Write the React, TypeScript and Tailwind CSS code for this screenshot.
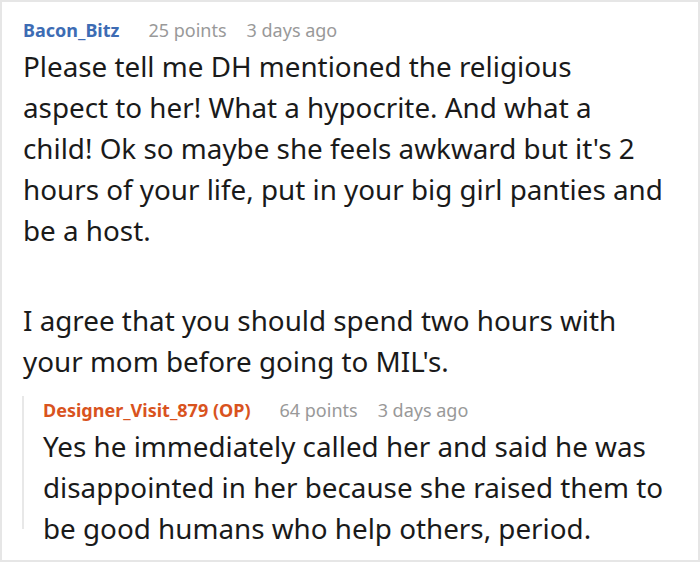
export default function App() {
  return (
    <div className="w-[700px] h-[562px] bg-white overflow-hidden" style={{ fontFamily: '"Noto Sans", sans-serif' }}>
      <div className="w-[700px] h-[562px] border-2 border-[#e6e6e6] pl-[21px] pr-[34px] pt-[13px]">
        <div className="flex items-baseline text-[18px] leading-[30px]">
          <span className="font-bold text-[#3d6cb4]">Bacon_Bitz</span>
          <span className="ml-[29px] text-[#999999]">25 points</span>
          <span className="ml-[20px] text-[#999999]">3 days ago</span>
        </div>
        <div className="mt-[1px] text-[27.8px] leading-[41px] text-[#1a1a1a]">
          <p>
            Please tell me DH mentioned the religious
            <br />
            aspect to her! What a hypocrite. And what a child! Ok so maybe she feels awkward but it's 2 hours of your life, put in your big girl panties and be a host.
          </p>
          <p className="mt-[49px]">I agree that you should spend two hours with your mom before going to MIL's.</p>
        </div>
        <div className="mt-[28px] ml-[-1px] mr-[-2px] h-[133px] border-l-2 border-[#e8e8e8] pl-[19px]">
          <div className="mt-[-14px] flex items-baseline text-[18px] leading-[28px]">
            <span className="font-bold text-[#d9531e]">Designer_Visit_879 (OP)</span>
            <span className="ml-[29px] text-[#999999]">64 points</span>
            <span className="ml-[20px] text-[#999999]">3 days ago</span>
          </div>
          <div className="mt-[2px] text-[27.8px] leading-[41px] text-[#1a1a1a]">
            <p>Yes he immediately called her and said he was disappointed in her because she raised them to be good humans who help others, period.</p>
          </div>
        </div>
      </div>
    </div>
  );
}
